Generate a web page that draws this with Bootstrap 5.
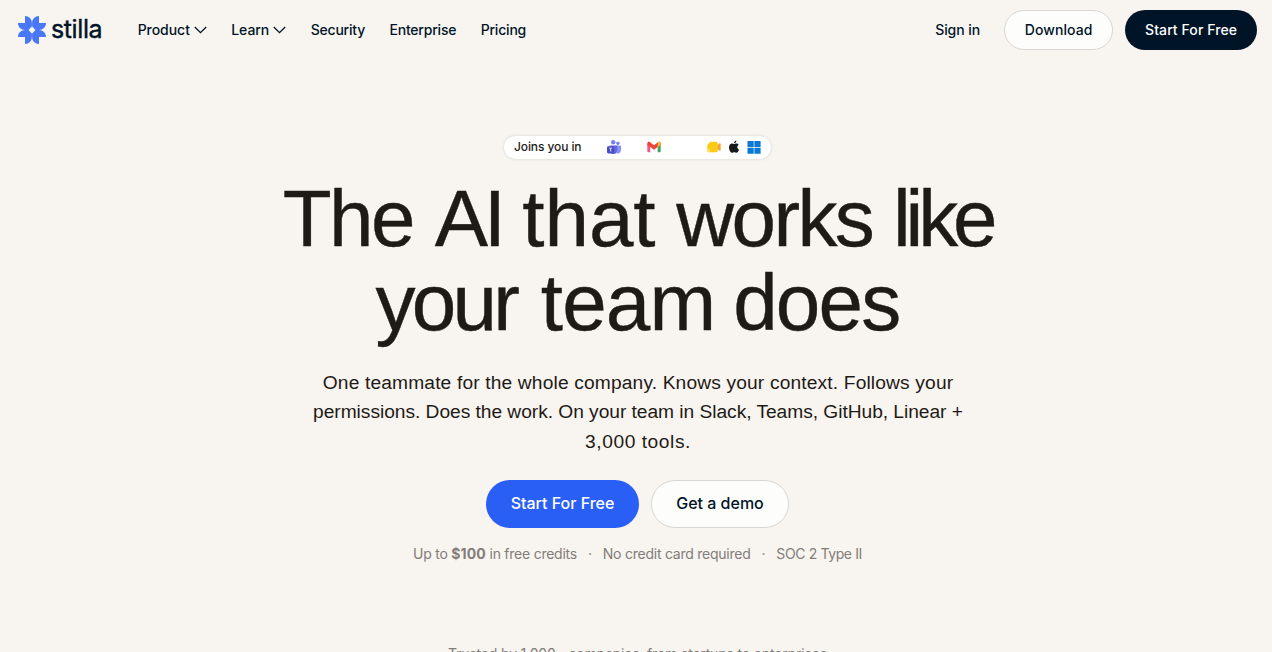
<!DOCTYPE html>
<html lang="en">
<head>
  <meta charset="UTF-8">
  <title>Stilla</title>
  <meta name="viewport" content="width=device-width, initial-scale=1">
  <!-- Bootstrap 5 -->
  <link href="https://cdn.jsdelivr.net/npm/bootstrap@5.3.0/dist/css/bootstrap.min.css" rel="stylesheet">
  <style>
    :root {
      --cream:  #f8f4f0;
      --navy:   #001427;
      --ink:    #1e1a16;
      --blue:   #295ff4;
      --grey:   #827d79;
      --line:   #d9d6d3;
    }
    body {
      background: var(--cream);
      color: var(--ink);
      font-family: Inter, "Liberation Sans", sans-serif;
      overflow: hidden;
    }
    .site-nav {
      height: 60px;
      padding: 0 15px 0 18px;
      font-size: 14px;
      font-weight: 500;
    }
    .site-nav .navbar-brand {
      color: var(--navy);
      font-size: 25px;
      line-height: 28px;
      font-weight: 400;
      gap: 5px;
      margin-right: 35.5px;
      letter-spacing: -.4px;
    }
    .brand-name {
      margin-top: -3px;
      -webkit-text-stroke: .4px var(--navy);
    }
    .site-nav .nav-link {
      color: var(--navy);
      line-height: 20px;
      letter-spacing: -.05px;
    }
    .site-nav .nav-tight { letter-spacing: -.2px; }
    .main-links { gap: 24.4px; }
    .nav-actions .pill + .pill { margin-left: 12px; }
    .pill {
      display: flex;
      align-items: center;
      justify-content: center;
      border-radius: 50px;
      height: 40px;
      padding: 0 19.6px 2px;
      font-size: 14px;
      font-weight: 500;
      border: 1px solid transparent;
      letter-spacing: .08px;
    }
    .pill-navy { padding: 0 19px 2px; }
    .pill-lg {
      height: 48px;
      padding: 0 23.6px 2px;
      font-size: 16px;
      letter-spacing: 0;
    }
    .pill-lg.pill-light { padding: 0 24.2px 2px; }
    .pill-light { background: #fdfdfb; border-color: var(--line); color: var(--navy); }
    .pill-navy  { background: var(--navy); color: #fff; }
    .pill-blue  { background: var(--blue); color: #fff; }

    .hero { padding: 76px 0 0 3px; }
    .joins {
      height: 23px;
      width: 267px;
      padding: 0 10px 1px;
      border-radius: 12px;
      background: #fff;
      box-shadow: 0 0 3px rgba(30,26,22,.16);
      font-size: 12px;
      font-weight: 500;
      letter-spacing: -.1px;
    }
    .app-icons { gap: 6px; }
    .app-icons svg, .app-icons span { width: 14px; height: 14px; }

    h1 {
      margin: 18px 0 0;
      font-family: "Liberation Sans", Arial, sans-serif;
      font-size: 80px;
      line-height: 84px;
      font-weight: 400;
      letter-spacing: -2.5px;
      word-spacing: 2px;
      -webkit-text-stroke: .4px var(--ink);
    }
    .w-ai    { letter-spacing: -4.5px; }
    .w-that  { letter-spacing: 0; margin: 0 1px 0 -1px; }
    .w-works { letter-spacing: -2.6px; margin-left: -2px; }
    .w-like  { letter-spacing: -5.2px; margin-left: -1px; }
    .w-your  { letter-spacing: -3.8px; }
    .w-team  { letter-spacing: -.8px; margin: 0 -4px 0 3px; }
    .w-does  { letter-spacing: -1.8px; }
    .intro {
      margin-top: 23px;
      padding-left: 1px;
      font-family: "Liberation Sans", Arial, sans-serif;
      font-size: 19.2px;
      line-height: 29.4px;
      letter-spacing: .15px;
    }
    .intro .snug { letter-spacing: -.04px; }
    .intro .wide { letter-spacing: .55px; }
    .cta { margin-top: 24px; gap: 12px; }
    .perks, .trusted {
      font-size: 14px;
      line-height: 20px;
      color: var(--grey);
      white-space: nowrap;
    }
    .perks { margin-top: 16px; gap: 11px; letter-spacing: -.24px; }
    .perks b { letter-spacing: .1px; }
    .perks .soc { letter-spacing: -.38px; }
    .trusted { margin-top: 80px; letter-spacing: -.17px; }
  </style>
</head>
<body>
  <!-- header -->
  <nav class="navbar site-nav d-flex flex-nowrap justify-content-start">
    <a class="navbar-brand d-flex align-items-center p-0" href="#">
      <svg width="28" height="28" viewBox="0 0 28 28" fill="#4878f8">
        <path id="leaf" d="M7 0C11 0 13.9 3 13.9 7V10.5L10.5 13.9H7C3 13.9 0 11 0 7H7Z"/>
        <use href="#leaf" transform="rotate(90 14 14)"/>
        <use href="#leaf" transform="rotate(180 14 14)"/>
        <use href="#leaf" transform="rotate(270 14 14)"/>
      </svg>
      <span class="brand-name">stilla</span>
    </a>
    <div class="d-flex main-links">
      <a class="nav-link p-0 d-flex align-items-center" href="#">Product
        <svg class="ms-1" width="13" height="8" viewBox="0 0 13 8" fill="none" stroke="#001427" stroke-width="1.3"><path d="M.8 1L6.5 6.7L12.2 1"/></svg>
      </a>
      <a class="nav-link p-0 d-flex align-items-center" href="#">Learn
        <svg class="ms-1" width="13" height="8" viewBox="0 0 13 8" fill="none" stroke="#001427" stroke-width="1.3"><path d="M.8 1L6.5 6.7L12.2 1"/></svg>
      </a>
      <a class="nav-link nav-tight p-0" href="#">Security</a>
      <a class="nav-link nav-tight p-0" href="#">Enterprise</a>
      <a class="nav-link nav-tight p-0" href="#">Pricing</a>
    </div>
    <div class="nav-actions d-flex align-items-center ms-auto">
      <a class="nav-link p-0 me-4" href="#">Sign in</a>
      <a class="pill pill-light text-decoration-none" href="#">Download</a>
      <a class="pill pill-navy text-decoration-none" href="#">Start For Free</a>
    </div>
  </nav>

  <!-- hero -->
  <main class="hero d-flex flex-column align-items-center text-center">
    <div class="joins d-flex align-items-center justify-content-between">
      <span>Joins you in</span>
      <div class="app-icons d-flex">
        <!-- Teams -->
        <svg viewBox="0 0 14 14">
          <circle cx="10.9" cy="3.2" r="1.7" fill="#7585f0"/>
          <circle cx="6.2" cy="2.3" r="2.2" fill="#7380ee"/>
          <path d="M8 5.5h5a1 1 0 0 1 1 1V10a3.5 3.5 0 0 1-4 3.5z" fill="#8a90f5"/>
          <path d="M2.5 5.5h7.7v5a3.6 3.6 0 0 1-7.2 0z" fill="#6568e6"/>
          <rect x="0" y="6.2" width="7.2" height="7.2" rx="1.4" fill="#4c4cc6"/>
          <path d="M2.3 8.2h2.8M3.7 8.2v3.4" stroke="#fff" stroke-width=".8"/>
        </svg>
        <span></span>
        <!-- Gmail -->
        <svg viewBox="0 0 14 14">
          <path d="M.3 4h3v8.3h-2a1 1 0 0 1-1-1z" fill="#f05a80"/>
          <path d="M10.7 4h3v7.3a1 1 0 0 1-1 1h-2z" fill="#35a95b"/>
          <path d="M.3 3.4c0-1.7 1.6-2.1 2.8-1.2L7 5.3l3.9-3.1c1.2-.9 2.8-.5 2.8 1.2v1.3L7 9.7.3 4.7z" fill="#ee4438"/>
          <path d="M10.7 2.4c1.3-1 3-.6 3 1v1.5l-3 2.3z" fill="#f6b62c"/>
        </svg>
        <span></span>
        <span></span>
        <!-- Meet -->
        <svg viewBox="0 0 14 14">
          <path d="M9 6.4l3.2-2.8c.8-.7 1.5-.4 1.5.6v5.6c0 1-.7 1.3-1.5.6L9 7.8z" fill="#f6a13a"/>
          <path d="M3.5 1.8h5.7a1.5 1.5 0 0 1 1.5 1.5v7.4a1.5 1.5 0 0 1-1.5 1.5H1.8a1.5 1.5 0 0 1-1.5-1.5V5z" fill="#fccb17"/>
          <path d="M.3 9h2.5v3.2h-1a1.5 1.5 0 0 1-1.5-1.5z" fill="#fde16c"/>
        </svg>
        <!-- Apple -->
        <svg viewBox="0 0 14 14" fill="#191919">
          <path d="M9.4.6c.1 1.4-1 2.7-2.4 2.7C6.9 2 8.1.8 9.4.6z"/>
          <path d="M7.1 4.1c.6 0 1.2-.6 2.3-.6.9 0 1.8.5 2.3 1.3-2 1.2-1.7 4 .4 4.8-.5 1.4-1.5 3.2-2.7 3.2-.8 0-1.1-.5-2.1-.5s-1.4.5-2.1.5C3.5 12.8 2 9.9 2 7.5c0-2.5 1.5-3.9 3-3.9.9 0 1.6.5 2.1.5z"/>
        </svg>
        <!-- Windows -->
        <svg viewBox="0 0 14 14" fill="#0a78d4">
          <path d="M.5.9h6.2v6.1H.5zM7.4.9h6.2v6.1H7.4zM.5 7.7h6.2v6.1H.5zM7.4 7.7h6.2v6.1H7.4z"/>
        </svg>
      </div>
    </div>

    <h1>The <span class="w-ai">AI</span> <span class="w-that">that</span> <span class="w-works">works</span> <span class="w-like">like</span><br><span class="w-your">your</span> <span class="w-team">team</span> <span class="w-does">does</span></h1>

    <p class="intro mb-0">One teammate for the whole company. Knows your context. Follows your<br><span class="snug">permissions. Does the work. On your team in Slack, Teams, GitHub, Linear +</span><br><span class="wide">3,000 tools.</span></p>

    <div class="cta d-flex">
      <a class="pill pill-lg pill-blue text-decoration-none" href="#">Start For Free</a>
      <a class="pill pill-lg pill-light text-decoration-none" href="#">Get a demo</a>
    </div>

    <div class="perks d-flex">
      <span>Up to <b>$100</b> in free credits</span>
      <span>·</span>
      <span>No credit card required</span>
      <span>·</span>
      <span class="soc">SOC 2 Type II</span>
    </div>

    <p class="trusted mb-0">Trusted by 1,000+ companies, from startups to enterprises</p>
  </main>

  <script src="https://cdn.jsdelivr.net/npm/bootstrap@5.3.0/dist/js/bootstrap.bundle.min.js"></script>
</body>
</html>
